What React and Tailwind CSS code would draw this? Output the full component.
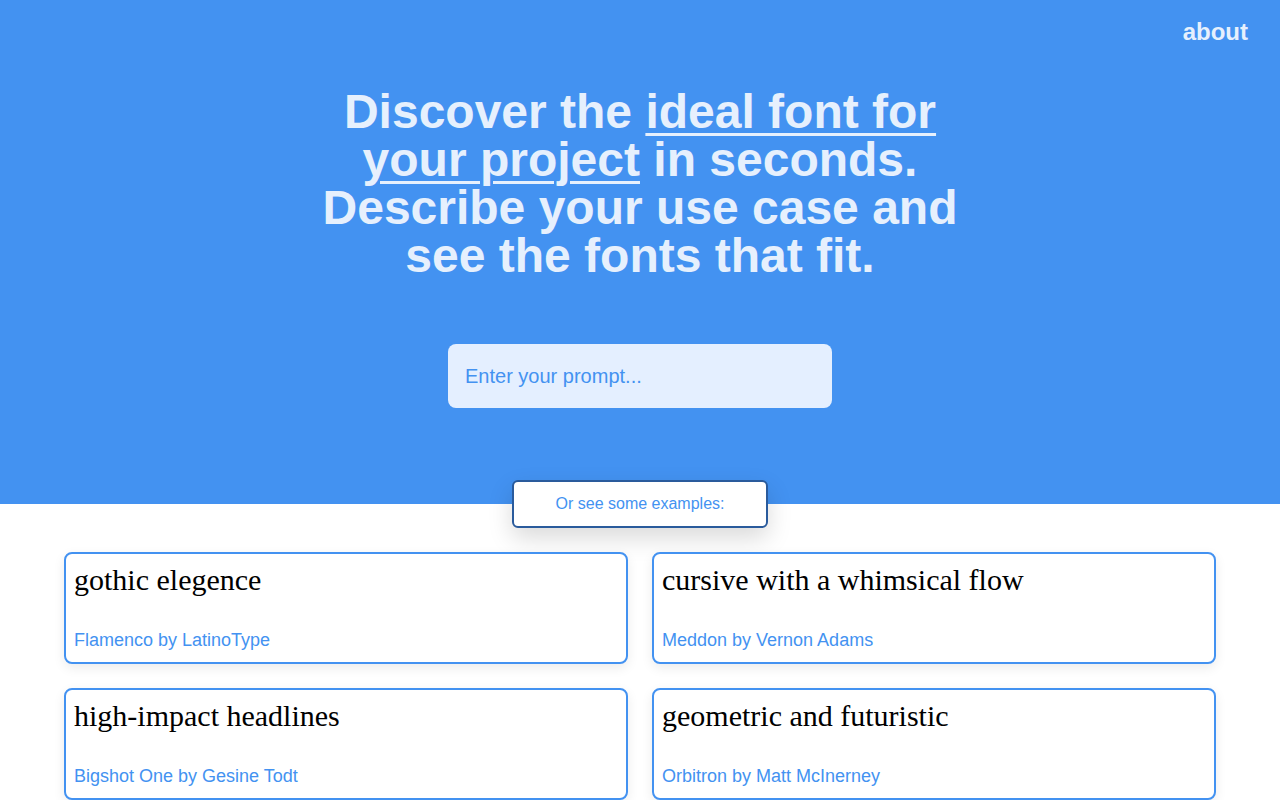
const examples = [
    { prompt: 'gothic elegence', font: 'Flamenco by LatinoType' },
    { prompt: 'cursive with a whimsical flow', font: 'Meddon by Vernon Adams' },
    { prompt: 'high-impact headlines', font: 'Bigshot One by Gesine Todt' },
    { prompt: 'geometric and futuristic', font: 'Orbitron by Matt McInerney' },
]

export default function App() {
    return (
        <div className="min-h-screen w-full bg-white font-['Liberation_Sans',Arial,sans-serif]">
            <div className="flex flex-col items-center bg-[#4392f1] pb-24">
                <div className="flex w-full h-16 items-center justify-end px-8">
                    <a className="text-2xl font-bold text-[#e6f0fd] cursor-pointer">about</a>
                </div>
                <h1 className="mt-6 max-w-[650px] text-center text-5xl leading-[48px] font-bold text-[#e6f0fd]">
                    Discover the <span className="underline decoration-[3px] underline-offset-[5px]">ideal font for your project</span> in seconds. Describe your use case and see the fonts that fit.
                </h1>
                <input
                    type="text"
                    placeholder="Enter your prompt..."
                    className="mt-16 h-16 w-[384px] rounded-lg bg-[#e4efff] px-[17px] text-xl text-[#4392f1] placeholder-[#4392f1] focus:outline-none"
                />
            </div>
            <div className="flex justify-center -mt-6">
                <button className="h-12 w-64 rounded-md border-2 border-[#2a5b9c] bg-white text-base text-[#4392f1] shadow-[0_10px_25px_rgba(0,0,0,0.15)]">
                    Or see some examples:
                </button>
            </div>
            <div className="mt-6 grid grid-cols-2 gap-6 px-16">
                {examples.map((ex) => (
                    <div key={ex.prompt} className="flex h-28 flex-col justify-between rounded-lg border-2 border-[#4392f1] bg-white px-2 pt-2 pb-2 shadow-[0_4px_12px_rgba(0,0,0,0.08)] cursor-pointer">
                        <div className="text-3xl leading-9 text-black font-['Liberation_Serif','Times_New_Roman',serif]">{ex.prompt}</div>
                        <div className="text-lg leading-7 text-[#4392f1]">{ex.font}</div>
                    </div>
                ))}
            </div>
        </div>
    )
}
